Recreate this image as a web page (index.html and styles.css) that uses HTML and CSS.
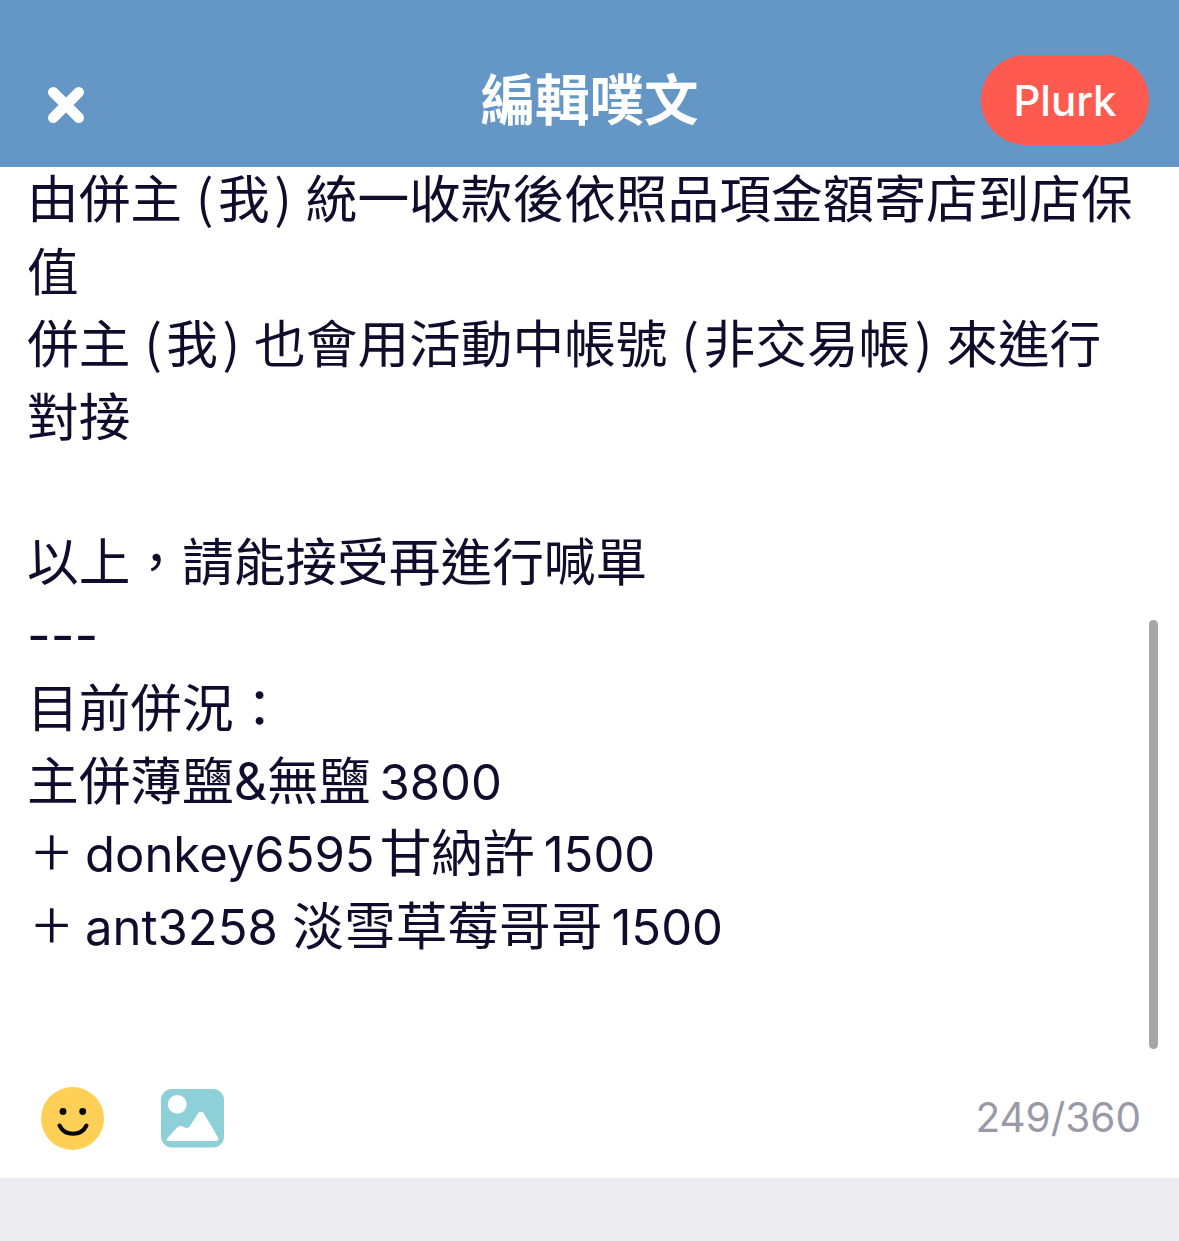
FILE: index.html
```html
<!DOCTYPE html>
<html lang="zh-Hant">
<head>
    <meta charset="UTF-8">
    <meta name="viewport" content="width=device-width, initial-scale=1.0">
    <title>編輯噗文</title>
    <link rel="stylesheet" href="styles.css">
</head>
<body>
    <div class="header">
        <div class="header-left">
            <svg class="close-icon" width="38" height="38" viewBox="0 0 38 38">
                <path d="M6.250 6.250L31.750 31.750M31.750 6.250L6.250 31.750" stroke="#fff" stroke-width="10.500" stroke-linecap="round"/>
            </svg>
        </div>
        <div class="title">編輯噗文</div>
        <div class="header-right">
            <div class="plurk-button">Plurk</div>
        </div>
    </div>

    <div class="editor">
        <div class="editor-text">
            <div class="line">由併主<span class="paren-open">(</span>我<span class="paren-close">)</span>統一收款後依照品項金額寄店到店保</div>
            <div class="line">值</div>
            <div class="line">併主<span class="paren-open">(</span>我<span class="paren-close">)</span>也會用活動中帳號<span class="paren-open">(</span>非交易帳<span class="paren-close">)</span>來進行</div>
            <div class="line">對接</div>
            <div class="line"></div>
            <div class="line">以上，請能接受再進行喊單</div>
            <div class="line">---</div>
            <div class="line">目前併況：</div>
            <div class="line">主併薄鹽&amp;無鹽<span class="latin gap">3800</span></div>
            <div class="line"><span class="plus">+</span> <span class="latin">donkey6595</span><span class="gap-small">甘納許</span><span class="latin gap">1500</span></div>
            <div class="line"><span class="plus">+</span> <span class="latin">ant3258</span> 淡雪草莓哥哥<span class="latin gap">1500</span></div>
        </div>
        <div class="scrollbar"></div>
    </div>

    <div class="toolbar">
        <svg class="smile-icon" width="64" height="64" viewBox="0 0 64 64">
            <circle cx="31.500" cy="31.500" r="31.500" fill="#fdd055"/>
            <circle cx="22" cy="24.500" r="3.400" fill="#000"/>
            <circle cx="41.700" cy="24.500" r="3.400" fill="#000"/>
            <path d="M18.500 38.500C24 49.500 40 49.500 45.500 38.500" fill="none" stroke="#000" stroke-width="4" stroke-linecap="round"/>
        </svg>
        <svg class="image-icon" width="64" height="59" viewBox="0 0 64 59">
            <rect x="0" y="0" width="63" height="58.500" rx="11" fill="#8dd0d8"/>
            <circle cx="16.300" cy="15.300" r="9.400" fill="#fff"/>
            <path d="M6.500 49L16 38.500C18 36.500 21 36.500 23 38C25 39.500 27.500 39 29 37L37 24.500C38.700 22 41.300 22 43 24.500L57 48.500C58 50.500 57 52 55 52H8C5.500 52 5 50.500 6.500 49Z" fill="#fff"/>
        </svg>
        <div class="counter">249/360</div>
    </div>

    <div class="bottom-bar"></div>
</body>
</html>
```

FILE: styles.css
```css
* {
    margin: 0;
    padding: 0;
    box-sizing: border-box;
}

body, html {
    height: 100%;
    overflow: hidden;
    background-color: white;
}

body {
    display: flex;
    flex-direction: column;
    font-family: Inter, "Noto Sans CJK TC", sans-serif;
}

.header {
    height: 167px;
    flex-shrink: 0;
    padding: 33px 30px 0 30px;
    display: grid;
    grid-template-columns: 1fr auto 1fr;
    align-items: center;
    background-color: #6597c6;
    color: white;
}

.close-icon {
    display: block;
    margin-top: 10px;
    margin-left: 17px;
}

.title {
    font-size: 54.500px;
    font-weight: 700;
    line-height: 70px;
}

.header-right {
    display: flex;
    justify-content: flex-end;
}

.plurk-button {
    width: 168px;
    height: 90px;
    border-radius: 45px;
    display: flex;
    align-items: center;
    justify-content: center;
    background-color: #ff5a50;
    font-size: 42px;
    font-weight: 500;
}

.editor {
    flex: 1;
    min-height: 0;
    position: relative;
    overflow: hidden;
}

.editor-text {
    margin-top: -4px;
    padding-left: 27px;
    font-size: 51.700px;
    line-height: 72.700px;
    color: #100c2c;
}

.line {
    height: 72.700px;
    white-space: pre;
}

.latin {
    font-size: 49px;
    line-height: 0;
}

.gap {
    margin-left: 9px;
}

.gap-small {
    margin-left: 5px;
}

.plus {
    margin-left: 6px;
    font-family: "Noto Sans CJK TC", sans-serif;
    font-size: 70px;
    font-weight: 300;
    line-height: 0;
    vertical-align: -6px;
}

.paren-open {
    margin: 0 4.500px 0 14px;
    font-family: "Noto Sans CJK TC", sans-serif;
    line-height: 0;
}

.paren-close {
    margin: 0 14px 0 4.500px;
    font-family: "Noto Sans CJK TC", sans-serif;
    line-height: 0;
}

.scrollbar {
    position: absolute;
    top: 453px;
    left: 1149px;
    width: 9px;
    height: 429px;
    border-radius: 5px;
    background-color: #a6a6a6;
}

.toolbar {
    height: 129px;
    flex-shrink: 0;
    padding: 38px 38px 0 41px;
    display: flex;
    align-items: flex-start;
    gap: 56px;
}

.image-icon {
    margin-top: 2px;
}

.counter {
    margin-left: auto;
    margin-top: 3px;
    font-size: 40.500px;
    line-height: 56px;
    color: #9a99a8;
}

.bottom-bar {
    height: 63px;
    flex-shrink: 0;
    background-color: #ecebf0;
}
```
